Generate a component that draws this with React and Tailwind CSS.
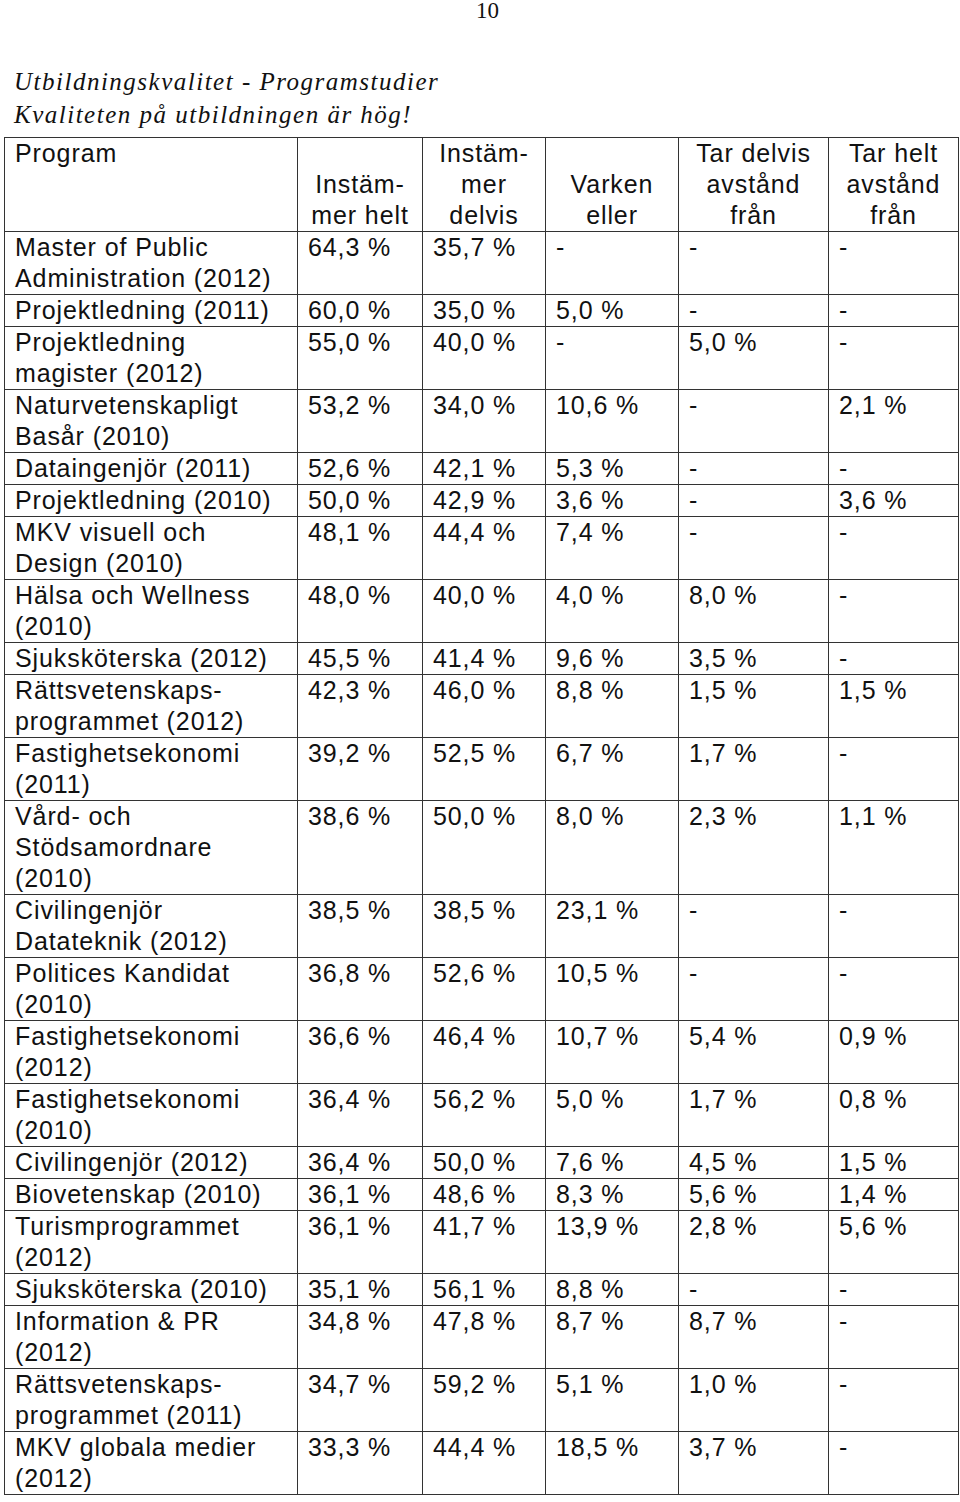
import React from 'react';

const rows = [
  ['Master of Public Administration (2012)', '64,3 %', '35,7 %', '-', '-', '-'],
  ['Projektledning (2011)', '60,0 %', '35,0 %', '5,0 %', '-', '-'],
  ['Projektledning magister (2012)', '55,0 %', '40,0 %', '-', '5,0 %', '-'],
  ['Naturvetenskapligt Basår (2010)', '53,2 %', '34,0 %', '10,6 %', '-', '2,1 %'],
  ['Dataingenjör (2011)', '52,6 %', '42,1 %', '5,3 %', '-', '-'],
  ['Projektledning (2010)', '50,0 %', '42,9 %', '3,6 %', '-', '3,6 %'],
  ['MKV visuell och Design (2010)', '48,1 %', '44,4 %', '7,4 %', '-', '-'],
  ['Hälsa och Wellness (2010)', '48,0 %', '40,0 %', '4,0 %', '8,0 %', '-'],
  ['Sjuksköterska (2012)', '45,5 %', '41,4 %', '9,6 %', '3,5 %', '-'],
  ['Rättsvetenskaps-programmet (2012)', '42,3 %', '46,0 %', '8,8 %', '1,5 %', '1,5 %'],
  ['Fastighetsekonomi (2011)', '39,2 %', '52,5 %', '6,7 %', '1,7 %', '-'],
  ['Vård- och Stödsamordnare (2010)', '38,6 %', '50,0 %', '8,0 %', '2,3 %', '1,1 %'],
  ['Civilingenjör Datateknik (2012)', '38,5 %', '38,5 %', '23,1 %', '-', '-'],
  ['Politices Kandidat (2010)', '36,8 %', '52,6 %', '10,5 %', '-', '-'],
  ['Fastighetsekonomi (2012)', '36,6 %', '46,4 %', '10,7 %', '5,4 %', '0,9 %'],
  ['Fastighetsekonomi (2010)', '36,4 %', '56,2 %', '5,0 %', '1,7 %', '0,8 %'],
  ['Civilingenjör (2012)', '36,4 %', '50,0 %', '7,6 %', '4,5 %', '1,5 %'],
  ['Biovetenskap (2010)', '36,1 %', '48,6 %', '8,3 %', '5,6 %', '1,4 %'],
  ['Turismprogrammet (2012)', '36,1 %', '41,7 %', '13,9 %', '2,8 %', '5,6 %'],
  ['Sjuksköterska (2010)', '35,1 %', '56,1 %', '8,8 %', '-', '-'],
  ['Information & PR (2012)', '34,8 %', '47,8 %', '8,7 %', '8,7 %', '-'],
  ['Rättsvetenskaps-programmet (2011)', '34,7 %', '59,2 %', '5,1 %', '1,0 %', '-'],
  ['MKV globala medier (2012)', '33,3 %', '44,4 %', '18,5 %', '3,7 %', '-'],
];

// hyphenated names break after the hyphen like the scan
function ProgramName({ name }) {
  const parts = name.split('-programmet');
  if (parts.length === 2) {
    return (
      <>
        Rättsvetenskaps-
        <br />
        programmet{parts[1]}
      </>
    );
  }
  return name;
}

const cell = 'border border-[#333] align-top pl-[10px] pr-1 py-0';
const head = 'border border-[#333] align-bottom text-center px-1 py-0 font-normal';

export default function App() {
  return (
    <div className="min-h-[1502px] bg-white text-[#111]">
      <div className="pl-[476px] h-[20px] font-['Liberation_Serif','Times_New_Roman',serif] text-[23px] leading-[20px] pt-[1px]">
        10
      </div>

      <div className="pl-[14px] pt-[45px] font-['Liberation_Serif','Times_New_Roman',serif] italic text-[25px] tracking-[1.5px] leading-[33px]">
        <p>Utbildningskvalitet - Programstudier</p>
        <p>Kvaliteten på utbildningen är hög!</p>
      </div>

      <div className="pl-[4px] pt-[6px]">
        <table className="table-fixed border-collapse w-[954px] font-['Liberation_Sans',Arial,sans-serif] text-[25px] tracking-[0.9px] leading-[31px]">
          <colgroup>
            <col className="w-[293px]" />
            <col className="w-[125px]" />
            <col className="w-[123px]" />
            <col className="w-[133px]" />
            <col className="w-[150px]" />
            <col className="w-[130px]" />
          </colgroup>
          <thead>
            <tr>
              <th className="border border-[#333] align-top text-left font-normal pl-[10px] py-0">Program</th>
              <th className={head}>
                Instäm-
                <br />
                mer helt
              </th>
              <th className={head}>
                Instäm-
                <br />
                mer
                <br />
                delvis
              </th>
              <th className={head}>
                Varken
                <br />
                eller
              </th>
              <th className={head}>
                Tar delvis
                <br />
                avstånd
                <br />
                från
              </th>
              <th className={head}>
                Tar helt
                <br />
                avstånd
                <br />
                från
              </th>
            </tr>
          </thead>
          <tbody>
            {rows.map((r, i) => (
              <tr key={i}>
                <td className={cell}>
                  <ProgramName name={r[0]} />
                </td>
                {r.slice(1).map((v, j) => (
                  <td key={j} className={cell}>
                    {v}
                  </td>
                ))}
              </tr>
            ))}
          </tbody>
        </table>
      </div>
    </div>
  );
}
